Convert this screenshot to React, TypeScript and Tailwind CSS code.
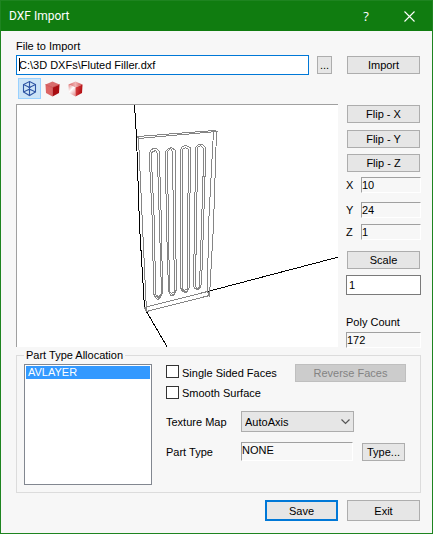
import type { ReactNode } from "react";

const field =
  "block h-4 w-full min-w-0 border-t border-l border-r border-b border-t-[#a0a0a0] border-l-[#a0a0a0] border-r-white border-b-white bg-[#f7f7f7] p-0 outline-none";

function PushButton({ children, className = "" }: { children: ReactNode; className?: string }) {
  return (
    <button
      type="button"
      className={`flex shrink-0 items-center justify-center border border-[#adadad] bg-[#e6e6e6] ${className}`}
    >
      {children}
    </button>
  );
}

function AxisField({ axis, value, className }: { axis: string; value: string; className: string }) {
  return (
    <label className={`flex items-center ${className}`}>
      <span className="w-[15px] shrink-0">{axis}</span>
      <input readOnly defaultValue={value} className={field} />
    </label>
  );
}

function WireCube() {
  return (
    <svg width="15" height="17" viewBox="0 0 15 17" fill="none" stroke="#2f55a4" strokeWidth="1.1">
      <path d="M7.5 1.5 13.5 4.5V12L7.5 15.5 1.5 12V4.5Z" />
      <path d="M7.5 1.5V15.5M1.5 4.5 7.5 7.5 13.5 4.5M1.5 12 7.5 9 13.5 12" />
      <path d="M6 6.5 9 10.5M9 6.5 6 10.5" strokeWidth="0.8" />
    </svg>
  );
}

function SolidCube() {
  return (
    <svg width="15" height="16" viewBox="0 0 15 16">
      <path d="M7.5 0.5 14.5 3.5 7.5 6.5 0.5 3.5Z" fill="#d96c6c" />
      <path d="M0.5 3.5 7.5 6.5V15.5L1 12Z" fill="#dc6464" />
      <path d="M14.5 3.5 7.5 6.5V15.5L14 12Z" fill="#a90d12" />
      <path d="M0.5 3.5 7.5 6.5 14.5 3.5" fill="none" stroke="#c5383b" strokeWidth="0.6" />
    </svg>
  );
}

function ShadedCube() {
  return (
    <svg width="15" height="16" viewBox="0 0 15 16">
      <defs>
        <linearGradient id="top" x1="0" x2="1">
          <stop offset="0" stopColor="#d96060" />
          <stop offset="0.5" stopColor="#f0b4b4" />
          <stop offset="1" stopColor="#cf4a4a" />
        </linearGradient>
        <linearGradient id="left" x1="0" y1="0" x2="0.6" y2="1">
          <stop offset="0" stopColor="#e08080" />
          <stop offset="0.5" stopColor="#ffffff" />
          <stop offset="1" stopColor="#e8a0a0" />
        </linearGradient>
        <linearGradient id="right" x1="0" y1="0" x2="1" y2="0.4">
          <stop offset="0" stopColor="#dc4a4a" />
          <stop offset="1" stopColor="#b30d12" />
        </linearGradient>
      </defs>
      <path d="M7.5 0.5 14.5 3.5 7.5 6.5 0.5 3.5Z" fill="url(#top)" />
      <path d="M0.5 3.5 7.5 6.5V15.5L1 12Z" fill="url(#left)" />
      <path d="M14.5 3.5 7.5 6.5V15.5L14 12Z" fill="url(#right)" />
    </svg>
  );
}

const flutes = [
  "M153 293 L152 225 L149 160 L149 152 L151 149 L153 148 L156 148 L159 151 L159 160 L161 225 L162 293 L159 298 L157 299 L155 297 Z",
  "M155 294 L154 225 L151 160 L151 152 L155 150 L157 153 L157 160 L159 225 L161 293 L158 296 L155 294 L158 298 L161 293",
  "M168 290 L166 225 L165 160 L165 151 L168 148 L171 147 L175 150 L175 160 L175 225 L176 290 L173 295 L170 295 Z",
  "M169 291 L168 225 L167 160 L167 151 L170 148 L172 151 L173 225 L174 291 L171 293 L169 291 L173 295 L175 290",
  "M180 287 L180 225 L180 160 L180 149 L182 146 L185 145 L190 147 L190 160 L189 225 L189 287 L186 292 L182 291 Z",
  "M182 289 L182 225 L182 160 L182 149 L185 147 L188 149 L188 160 L187 225 L187 288 L184 290 L182 289 L186 292 L188 288",
  "M193 285 L194 225 L195 160 L195 147 L198 144 L202 144 L205 147 L205 160 L203 225 L201 285 L198 289 L194 288 Z",
  "M195 286 L196 225 L197 160 L197 147 L200 145 L203 148 L203 160 L201 225 L199 286 L197 288 L195 286 L198 289 L200 285",
];

function ModelView() {
  return (
    <svg
      className="block h-[242px] w-full"
      viewBox="17 105 321 242"
      preserveAspectRatio="xMinYMin slice"
      fill="none"
      shapeRendering="crispEdges"
      role="img"
      aria-label="Fluted filler wireframe"
    >
      <g stroke="#000" transform="translate(0.5 0.5)">
        <path d="M134 104 L136 136 L139 225 L144 307" />
        <path d="M146 311 L167 347" />
        <path d="M207 291 L340 256" />
      </g>
      <g stroke="#858585" transform="translate(0.5 0.5)">
        <path d="M137 136 L214 130 L216 131 L138 138 Z" />
        <path d="M138 138 L142 225 L146 311 L144 307" />
        <path d="M213 131 L208 225 L207 291 L209 295 L213 225 L216 131" />
        <path d="M144 307 L207 291 M146 311 L209 295" />
        {flutes.map((d) => (
          <path key={d} d={d} />
        ))}
      </g>
    </svg>
  );
}

export default function App() {
  return (
    <div className="flex min-h-screen flex-col border border-[#1e8420] bg-[#f7f7f7] font-['Liberation_Sans',Arial,sans-serif] text-[11px] leading-[14px] text-black">
      <header className="flex h-[30px] shrink-0 items-center bg-[#107c10] pl-2 text-white">
        <h1 className="flex-1 font-[Roboto,sans-serif] text-[12px] font-normal">DXF Import</h1>
        <button type="button" aria-label="Help" className="w-[34px] font-['Open_Sans',sans-serif] text-[13px]">
          ?
        </button>
        <button type="button" aria-label="Close" className="ml-2 mr-1 flex w-[37px] justify-center">
          <svg width="11" height="11" viewBox="0 0 11 11" stroke="#fff" strokeWidth="1.1">
            <path d="M0.5 0.5 10.5 10.5M10.5 0.5 0.5 10.5" />
          </svg>
        </button>
      </header>

      <main className="flex flex-col pt-2 pr-[11px] pb-3 pl-[15px]">
        <label htmlFor="file">File to Import</label>
        <div className="mt-[2px] flex h-5 items-center pr-px">
          <div className="relative h-5 flex-1">
            <input
              id="file"
              defaultValue="C:\3D DXFs\Fluted Filler.dxf"
              className="block h-5 w-full border border-[#0078d7] bg-white pl-[2px] outline-none"
            />
            <span className="absolute top-[3px] left-[3px] h-[13px] w-px bg-black" />
          </div>
          <PushButton className="ml-2 h-[18px] w-[15px]">...</PushButton>
          <PushButton className="ml-[15px] h-[18px] w-[73px]">Import</PushButton>
        </div>

        <div className="mt-[3px] flex h-[21px] pl-[2px]">
          <button
            type="button"
            aria-label="Wireframe"
            className="flex w-[23px] items-center justify-center border border-[#99d1ff] bg-[#cce4f7]"
          >
            <WireCube />
          </button>
          <button type="button" aria-label="Solid" className="flex w-[23px] items-center justify-center">
            <SolidCube />
          </button>
          <button type="button" aria-label="Shaded" className="flex w-[23px] items-center justify-center">
            <ShadedCube />
          </button>
        </div>

        <div className="mt-[5px] flex items-start gap-2">
          <div className="min-w-0 flex-1 border-t border-l border-[#a0a0a0] bg-white">
            <ModelView />
          </div>
          <div className="flex w-[75px] shrink-0 flex-col pt-px">
            <PushButton className="mx-px h-[18px]">Flip - X</PushButton>
            <PushButton className="mx-px mt-[7px] h-[18px]">Flip - Y</PushButton>
            <PushButton className="mx-px mt-[6px] h-[18px]">Flip - Z</PushButton>
            <AxisField axis="X" value="10" className="mt-[5px]" />
            <AxisField axis="Y" value="24" className="mt-[9px]" />
            <AxisField axis="Z" value="1" className="mt-[6px]" />
            <PushButton className="mx-px mt-[11px] h-[18px]">Scale</PushButton>
            <input
              aria-label="Scale factor"
              defaultValue="1"
              className="mt-[6px] block h-5 w-full border border-[#7a7a7a] bg-white pl-[2px] outline-none"
            />
            <label htmlFor="poly" className="mt-5">
              Poly Count
            </label>
            <input id="poly" readOnly defaultValue="172" className={`mt-[3px] ${field}`} />
          </div>
        </div>

        <fieldset className="flex min-w-0 border border-[#dcdcdc] pt-[2px] pr-[14px] pb-[7px] pl-[7px]">
          <legend className="px-[2px]">Part Type Allocation</legend>
          <ul
            role="listbox"
            aria-label="Layers"
            className="h-[121px] w-32 shrink-0 border border-[#828790] bg-white p-px"
          >
            <li role="option" aria-selected="true" className="h-[13px] bg-[#3399ff] pl-[2px] leading-[13px] text-white">
              AVLAYER
            </li>
          </ul>
          <div className="ml-[14px] flex min-w-0 flex-1 flex-col">
            <div className="flex h-[18px] justify-between">
              <label className="flex items-center gap-[3px]">
                <input type="checkbox" className="mb-[3px] size-[13px] appearance-none border border-[#333] bg-white" />
                <span className="mb-px">Single Sided Faces</span>
              </label>
              <button
                type="button"
                disabled
                className="w-[111px] border border-[#bfbfbf] bg-[#cccccc] text-[#838383]"
              >
                Reverse Faces
              </button>
            </div>
            <label className="mt-1 flex h-[13px] items-center gap-[3px]">
              <input type="checkbox" className="size-[13px] appearance-none border border-[#333] bg-white" />
              Smooth Surface
            </label>
            <div className="mt-3 flex items-center">
              <label htmlFor="texture" className="w-[75px]">
                Texture Map
              </label>
              <div className="relative mr-[52px] h-[21px] flex-1">
                <select
                  id="texture"
                  className="block h-[21px] w-full appearance-none border border-[#adadad] bg-[#e6e6e6] pl-[3px] outline-none"
                >
                  <option>AutoAxis</option>
                </select>
                <svg
                  className="pointer-events-none absolute top-2 right-1"
                  width="9"
                  height="6"
                  viewBox="0 0 9 6"
                  fill="none"
                  stroke="#555"
                  strokeWidth="1.2"
                >
                  <path d="M0.5 0.5 4.5 4.5 8.5 0.5" />
                </svg>
              </div>
            </div>
            <div className="mt-[10px] flex items-center pr-px">
              <label htmlFor="part" className="w-[75px]">
                Part Type
              </label>
              <input
                id="part"
                readOnly
                defaultValue="NONE"
                className="block h-[19px] w-0 flex-1 border border-t-[#a0a0a0] border-r-white border-b-white border-l-[#a0a0a0] bg-[#f7f7f7] pb-1 outline-none"
              />
              <PushButton className="ml-[9px] h-[18px] w-[43px]">Type...</PushButton>
            </div>
          </div>
        </fieldset>

        <div className="mt-[7px] flex justify-end gap-[9px] pr-px">
          <button type="button" className="h-[21px] w-[73px] border-2 border-[#0078d7] bg-[#e6e6e6]">
            Save
          </button>
          <PushButton className="h-[21px] w-[73px]">Exit</PushButton>
        </div>
      </main>
    </div>
  );
}
